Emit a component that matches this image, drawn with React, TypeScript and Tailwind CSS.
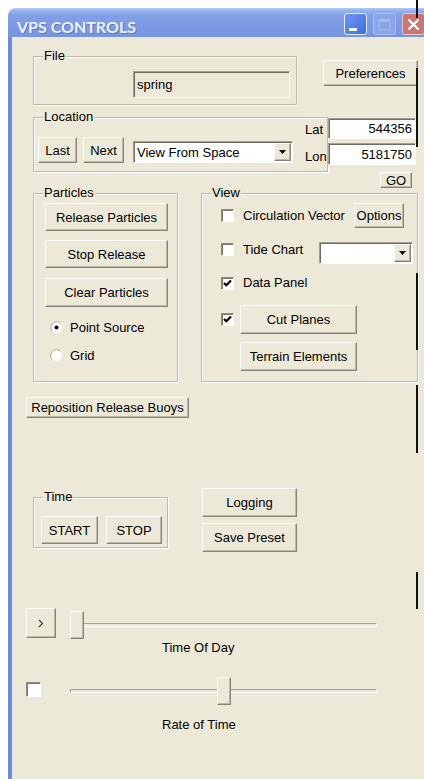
import React from "react";

type Kids = { className?: string; children?: React.ReactNode };

function Raised({ className = "", children }: Kids) {
  return (
    <div
      className={`flex shrink-0 items-center justify-center whitespace-nowrap bg-[#ece9d8] border border-t-white border-l-white border-r-[#85837a] border-b-[#85837a] shadow-[inset_-1px_-1px_0_#bcb9ab] leading-none text-black ${className}`}
    >
      {children}
    </div>
  );
}

function Sunken({ className = "", children }: Kids) {
  return (
    <div
      className={`shrink-0 border border-t-[#a3a093] border-l-[#a3a093] border-b-white border-r-white shadow-[inset_1px_1px_0_#6f6d63] ${className}`}
    >
      {children}
    </div>
  );
}

function Group({ label, className = "", children }: Kids & { label: string }) {
  return (
    <div
      className={`relative shrink-0 border border-[#bdbaa9] shadow-[inset_1px_1px_0_#fff,1px_1px_0_#fff] ${className}`}
    >
      <span className="absolute left-[9px] top-[-9px] bg-[#ece9d8] px-[1px] leading-[15px]">
        {label}
      </span>
      {children}
    </div>
  );
}

function Check({ on = false, className = "" }: { on?: boolean; className?: string }) {
  return (
    <div
      className={`relative shrink-0 bg-white border border-t-[#8e8c80] border-l-[#8e8c80] border-b-white border-r-white shadow-[inset_1px_1px_0_#7a786d] ${className}`}
    >
      {on && (
        <svg className="absolute left-0 top-0" width="11" height="11" viewBox="0 0 11 11">
          <polyline points="2,5 4.3,7.3 9,2.5" fill="none" stroke="#000" strokeWidth="2.2" />
        </svg>
      )}
    </div>
  );
}

function Radio({ on = false }: { on?: boolean }) {
  return (
    <svg width="13" height="13" viewBox="0 0 13 13" className="shrink-0">
      <circle cx="6.5" cy="6.5" r="5.8" fill="#fff" />
      <path d="M2.4 10.6 A5.8 5.8 0 0 1 10.6 2.4" fill="none" stroke="#a9a698" strokeWidth="1" />
      <path d="M10.6 2.4 A5.8 5.8 0 0 1 2.4 10.6" fill="none" stroke="#f4f2ea" strokeWidth="1" />
      {on && <circle cx="6.5" cy="6.5" r="2" fill="#000" />}
    </svg>
  );
}

function Combo({ className = "", value = "" }: { className?: string; value?: string }) {
  return (
    <Sunken className={`flex items-stretch bg-white py-[1px] pr-[1px] ${className}`}>
      <span className="flex flex-1 items-center pl-[3px] whitespace-nowrap">{value}</span>
      <Raised className="w-[17px]">
        <svg width="7" height="4" viewBox="0 0 7 4">
          <path d="M0 0H7L3.5 4Z" fill="#000" />
        </svg>
      </Raised>
    </Sunken>
  );
}

function Slider({ className = "", thumb }: { className?: string; thumb: string }) {
  return (
    <div className={`relative h-[28px] w-[307px] shrink-0 ${className}`}>
      <div className="absolute left-0 right-0 top-[12px] h-[4px] border border-t-[#a7a496] border-l-[#a7a496] border-b-white border-r-white" />
      <Raised className={`absolute top-0 h-[28px] w-[14px] ${thumb}`} />
    </div>
  );
}

function TitleBar() {
  return (
    <div className="flex h-[29px] rounded-tl-[8px] bg-[linear-gradient(180deg,#b4caf5_0px,#93b0ee_3px,#819fe6_8px,#7c9ae4_20px,#7694e0_29px)]">
      <div className="w-[336px] shrink-0 pl-[9px] pt-[11px] font-['Lato',sans-serif] text-[16px] font-bold leading-[16px] text-[#eef3fd] [text-shadow:1px_1px_0_#5d76c9]">
        VPS CONTROLS
      </div>
      <div className="mt-[5px] flex gap-[6px]">
        <div className="flex h-[22px] w-[23px] items-end rounded-[3px] border border-[#e6edfc] bg-[linear-gradient(135deg,#6f98f3,#3e6be0)] pb-[3px] pl-[4px]">
          <div className="h-[3px] w-[8px] bg-white" />
        </div>
        <div className="flex h-[22px] w-[23px] items-center justify-center rounded-[3px] border border-[#a9bff2] bg-[#8aa6ea]">
          <svg width="13" height="13" viewBox="0 0 13 13">
            <rect x="1" y="1.5" width="11" height="10.5" fill="none" stroke="#a8bdf1" strokeWidth="1" />
            <rect x="1" y="1" width="11" height="2.5" fill="#a8bdf1" />
          </svg>
        </div>
        <div className="flex h-[22px] w-[23px] items-center justify-center rounded-[3px] border border-[#ecc7c8] bg-[#cb7674]">
          <svg width="13" height="13" viewBox="0 0 13 13">
            <path d="M1.5 1.5L11.5 11.5M11.5 1.5L1.5 11.5" stroke="#fff" strokeWidth="2.4" />
          </svg>
        </div>
      </div>
    </div>
  );
}

export default function App() {
  return (
    <div className="relative h-[779px] w-[424px] overflow-hidden bg-white pl-[8px] pt-[8px] font-['Liberation_Sans',Arial,sans-serif] text-[13px] leading-[15px] text-black">
      <div className="w-[440px]">
        <TitleBar />
        <div className="flex h-[742px]">
          <div className="w-[4px] shrink-0 bg-[#7289e0]" />
          <div className="flex flex-1 flex-col items-start bg-[#ece9d8]">
            {/* file + preferences */}
            <div className="mt-[19px] flex items-start">
              <Group label="File" className="ml-[21px] h-[49px] w-[264px] pl-[99px] pt-[14px]">
                <Sunken className="flex h-[27px] w-[157px] items-center bg-[#ece9d8] pl-[3px]">
                  spring
                </Sunken>
              </Group>
              <Raised className="ml-[26px] mt-[4px] h-[26px] w-[95px]">Preferences</Raised>
            </div>

            {/* location */}
            <div className="mt-[12px] flex">
              <Group label="Location" className="ml-[21px] flex h-[55px] w-[295px] items-start pl-[4px]">
                <Raised className="mt-[19px] h-[26px] w-[39px]">Last</Raised>
                <Raised className="ml-[6px] mt-[19px] h-[26px] w-[41px]">Next</Raised>
                <Combo className="ml-[9px] mt-[23px] h-[22px] w-[160px]" value="View From Space" />
                <div className="ml-[12px] flex shrink-0 flex-col gap-[4px]">
                  <div className="flex items-end">
                    <span className="w-[23px] shrink-0 pb-[2px]">Lat</span>
                    <Sunken className="flex h-[21px] w-[88px] items-center justify-end bg-white pr-[3px]">
                      544356
                    </Sunken>
                  </div>
                  <div className="flex items-end">
                    <span className="w-[23px] shrink-0 pb-[1px]">Lon</span>
                    <Sunken className="flex h-[22px] w-[88px] items-center justify-end bg-white pr-[3px]">
                      5181750
                    </Sunken>
                  </div>
                </div>
              </Group>
            </div>

            <Raised className="ml-[368px] h-[16px] w-[32px]">GO</Raised>

            {/* particles + view */}
            <div className="mt-[5px] flex items-start">
              <Group label="Particles" className="ml-[21px] flex h-[189px] w-[145px] flex-col items-start pl-[11px]">
                <Raised className="mt-[9px] h-[28px] w-[123px]">Release Particles</Raised>
                <Raised className="mt-[9px] h-[28px] w-[123px]">Stop Release</Raised>
                <Raised className="mt-[10px] h-[29px] w-[123px]">Clear Particles</Raised>
                <div className="ml-[5px] mt-[13px] flex h-[15px] items-center gap-[7px]">
                  <Radio on />
                  <span>Point Source</span>
                </div>
                <div className="ml-[5px] mt-[13px] flex h-[15px] items-center gap-[7px]">
                  <Radio />
                  <span>Grid</span>
                </div>
              </Group>

              <Group label="View" className="ml-[23px] flex h-[189px] w-[217px] flex-col items-start pl-[19px]">
                <div className="mt-[9px] flex h-[25px] items-center">
                  <Check className="h-[13px] w-[13px]" />
                  <span className="ml-[9px] w-[111px] shrink-0 whitespace-nowrap">Circulation Vector</span>
                  <Raised className="h-[25px] w-[50px]">Options</Raised>
                </div>
                <div className="mt-[14px] flex h-[22px] items-start">
                  <Check className="mt-[1px] h-[13px] w-[13px]" />
                  <span className="ml-[9px] w-[76px] shrink-0">Tide Chart</span>
                  <Combo className="h-[22px] w-[94px]" />
                </div>
                <div className="mt-[13px] flex h-[13px] items-center">
                  <Check on className="h-[13px] w-[13px]" />
                  <span className="ml-[9px] -mt-[2px]">Data Panel</span>
                </div>
                <div className="mt-[15px] flex items-center">
                  <Check on className="h-[13px] w-[13px]" />
                  <Raised className="ml-[6px] h-[29px] w-[117px]">Cut Planes</Raised>
                </div>
                <Raised className="ml-[19px] mt-[8px] h-[29px] w-[117px]">Terrain Elements</Raised>
              </Group>
            </div>

            <Raised className="ml-[14px] mt-[15px] h-[21px] w-[163px]">Reposition Release Buoys</Raised>

            {/* time + logging */}
            <div className="mt-[70px] flex items-start">
              <Group label="Time" className="ml-[21px] mt-[9px] flex h-[51px] w-[135px] items-start pl-[7px] pt-[18px]">
                <Raised className="h-[28px] w-[57px]">START</Raised>
                <Raised className="ml-[8px] h-[28px] w-[56px]">STOP</Raised>
              </Group>
              <div className="ml-[34px] flex flex-col">
                <Raised className="h-[29px] w-[95px]">Logging</Raised>
                <Raised className="mt-[6px] h-[29px] w-[95px]">Save Preset</Raised>
              </div>
            </div>

            {/* time of day */}
            <div className="mt-[56px] flex items-start">
              <Raised className="ml-[14px] h-[30px] w-[30px]">
                <svg width="6" height="9" viewBox="0 0 6 9">
                  <polyline points="1,1 4.5,4.5 1,8" fill="none" stroke="#3a3a3a" strokeWidth="1.1" />
                </svg>
              </Raised>
              <Slider className="ml-[14px] mt-[3px]" thumb="left-0" />
            </div>
            <div className="ml-[150px] mt-[1px]">Time Of Day</div>

            {/* rate of time */}
            <div className="mt-[22px] flex items-start">
              <Check className="ml-[14px] mt-[5px] h-[15px] w-[15px]" />
              <Slider className="ml-[29px]" thumb="left-[147px]" />
            </div>
            <div className="ml-[150px] mt-[12px]">Rate of Time</div>
          </div>
        </div>
      </div>

      {/* stray vertical marker strokes */}
      <div className="absolute left-[416px] top-0 h-[18px] w-[2px] bg-[#111]" />
      <div className="absolute left-[416px] top-[68px] h-[79px] w-[2px] bg-[#111]" />
      <div className="absolute left-[416px] top-[273px] h-[77px] w-[2px] bg-[#111]" />
      <div className="absolute left-[416px] top-[385px] h-[68px] w-[2px] bg-[#111]" />
      <div className="absolute left-[416px] top-[572px] h-[37px] w-[2px] bg-[#111]" />
    </div>
  );
}
